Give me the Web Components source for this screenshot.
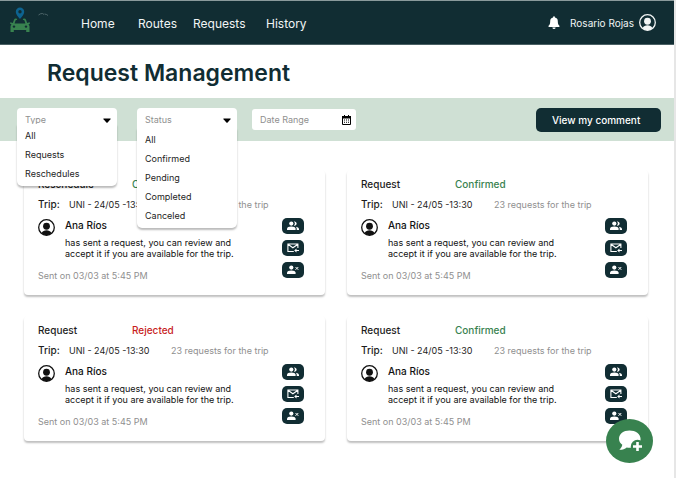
<!DOCTYPE html>
<html lang="en">
<head>
<meta charset="utf-8">
<title>Request Management</title>
<style>
  html, body { margin: 0; height: 100%; }
  body {
    font-family: Inter, "Liberation Sans", sans-serif;
    font-size: 9px;
    color: #1d1d1d;
    background: #fff;
    --ink: #112d33;
    --green: #38824f;
    --pale: #cfe0d4;
    --muted: #8f8f8f;
  }
</style>
</head>
<body>
<request-page></request-page>

<script>
const define = (name, html, setup) => {
  const tpl = document.createElement('template');
  tpl.innerHTML = html;
  customElements.define(name, class extends HTMLElement {
    constructor() {
      super();
      this.attachShadow({ mode: 'open' }).append(tpl.content.cloneNode(true));
    }
    connectedCallback() { if (setup) setup(this, this.shadowRoot); }
  });
};

define('user-avatar', `
<style>
  :host { display: block; width: 17px; height: 17px; flex: none; }
  svg { display: block; width: 100%; height: 100%; }
</style>
<svg viewBox="0 0 34 34" aria-hidden="true">
  <circle cx="17" cy="17" r="15.6" fill="none" stroke="currentColor" stroke-width="2.6"/>
  <circle cx="17" cy="14.5" r="6.8" fill="currentColor"/>
  <path d="M7 28c2-4 6-5.600 10-5.600s8 1.600 10 5.600c-3 3-6.500 4.300-10 4.300S10 31 7 28z" fill="currentColor"/>
</svg>`);

define('brand-logo', `
<style>
  :host { display: block; width: 40px; height: 27px; }
  svg { display: block; }
</style>
<svg width="40" height="27" viewBox="0 0 40 27" role="img" aria-label="Logo">
  <path d="M10 0.500a4.200 4.200 0 0 0-4.200 4.200C5.800 7.700 10 12 10 12s4.200-4.300 4.200-7.300A4.200 4.200 0 0 0 10 0.500z" fill="#0d6390"/>
  <circle cx="10" cy="4.700" r="1.700" fill="#112d33"/>
  <path d="M6.500 11.500H5.800Q4.500 11.500 4 12.800L2.800 16 .4 15.300 0 16.600l1.500.8Q.5 18.200.5 19.500v5.600h3.300v-2h12.400v2h3.300V19.500q0-1.300-1-2.100l1.500-.8-.4-1.300-2.400.7L16 12.800q-.5-1.300-1.800-1.300H13.500L12.700 13h1q.6 0 .8.500l.9 2.900H4.600l.9-2.900q.2-.5.8-.5h1z" fill="#38824f"/>
  <circle cx="4" cy="19.600" r="1.200" fill="#112d33"/>
  <circle cx="16" cy="19.600" r="1.200" fill="#112d33"/>
  <path d="M28.500 8q2-1.700 4-1.500l1.500 1M34.500 7q2 .2 3.500 1.500" fill="none" stroke="#5c7276" stroke-width=".8"/>
</svg>`);

define('app-header', `
<style>
  :host { display: block; background: var(--ink); color: #f2f5f5; border-top: 1px solid #8a9a9c; }
  header { display: flex; align-items: center; height: 43px; padding: 0 18px 0 10px; border-bottom: 1px solid #4a6064; }
  brand-logo { align-self: start; margin-top: 6px; }
  nav { display: grid; flex: 1; grid-template-columns: 57px 55px 73px auto; margin: 3px 0 0 31px; font-size: 12px; line-height: 16px; }
  a { color: inherit; text-decoration: none; }
  .user { display: flex; align-items: center; gap: 5px; font-size: 10px; color: inherit; }
  button { background: none; border: 0; padding: 0; margin: 0 10px 0 0; color: #fff; font: inherit; }
  button svg { display: block; }
</style>
<header>
  <brand-logo></brand-logo>
  <nav aria-label="Main">
    <a href="#home">Home</a><a href="#routes">Routes</a><a href="#requests">Requests</a><a href="#history">History</a>
  </nav>
  <button aria-label="Notifications">
    <svg width="12" height="13" viewBox="0 0 12 13"><path d="M6 .2a.9.9 0 0 1 .9.9v.4A3.700 3.700 0 0 1 9.800 5.200c0 2.600.6 3.600 1.600 4.500.5.500.2 1.200-.5 1.200H1.100c-.7 0-1-.7-.5-1.200 1-.9 1.600-1.900 1.600-4.500A3.700 3.700 0 0 1 5.100 1.500v-.4A.9.9 0 0 1 6 .2zM4.400 11.400h3.200a1.600 1.500 0 0 1-3.200 0z" fill="currentColor"/></svg>
  </button>
  <a class="user" href="#profile"><span>Rosario Rojas</span><user-avatar></user-avatar></a>
</header>`);

define('filter-select', `
<style>
  :host { display: block; position: relative; width: 100px; }
  select {
    display: block; box-sizing: border-box; width: 100%; height: 24px; padding: 0 8px;
    appearance: none; border: 0; border-radius: 4px; background: #fff;
    color: var(--muted); font: inherit; line-height: 22px;
  }
  .arrow { position: absolute; right: 6px; top: 10px; pointer-events: none; }
  ul {
    position: absolute; z-index: 2; left: 0; right: 0; top: var(--menu-top, 20px);
    margin: 0; padding: 2px 0 3px; list-style: none; background: #fff;
    border-radius: 0 0 5px 5px; box-shadow: 0 2px 2px rgba(0,0,0,.27);
  }
  li button {
    display: block; width: 100%; height: 19px; padding: 0 8px; border: 0; background: none;
    text-align: left; color: #1d1d1d; font: inherit;
  }
</style>
<select></select>
<svg class="arrow" width="8" height="5" viewBox="0 0 8 5" aria-hidden="true"><path d="M.8.400h6.400q.9.100.3.900L4.600 4.400q-.6.500-1.200 0L.5 1.300Q-.1.500.8.400z" fill="#000"/></svg>
<ul></ul>`, (host, root) => {
  const select = root.querySelector('select');
  const label = host.getAttribute('label');
  select.setAttribute('aria-label', label);
  select.add(new Option(label, ''));
  host.getAttribute('options').split(',').forEach(text => {
    select.add(new Option(text, text));
    const li = document.createElement('li');
    const b = document.createElement('button');
    b.type = 'button';
    b.textContent = text;
    b.addEventListener('click', () => { select.value = text; });
    li.append(b);
    root.querySelector('ul').append(li);
  });
});

define('date-field', `
<style>
  :host { display: flex; align-items: center; box-sizing: border-box; width: 104px; height: 21px; padding: 0 5px 0 8px; background: #fff; border-radius: 3px; }
  input { flex: 1; min-width: 0; border: 0; padding: 0; background: none; font: inherit; color: #1d1d1d; }
  input::placeholder { color: var(--muted); opacity: 1; }
</style>
<input type="text" placeholder="Date Range" aria-label="Date Range">
<svg width="9" height="10" viewBox="0 0 9 10" aria-hidden="true">
  <path d="M.5 1.500h8v8h-8z" fill="#fff" stroke="#000"/><path d="M0 1h9v2.500H0zM2 0h1v1H2zM6 0h1v1H6z" fill="#000"/>
  <path d="M2 4.500h1v1H2zM4 4.500h1v1H4zM6 4.500h1v1H6zM2 6.800h1v1H2zM4 6.800h1v1H4zM6 6.800h1v1H6z" fill="#000"/>
</svg>`);

define('filter-bar', `
<style>
  :host { display: flex; align-items: center; gap: 20px; height: 43px; padding: 0 13px 0 17px; background: var(--pale); }
  filter-select:first-of-type { --menu-top: 16px; }
  date-field { margin-left: -5px; }
  button {
    margin-left: auto; width: 125px; height: 24px; padding: 0 16px; border: 0; border-radius: 5px;
    background: var(--ink); color: #fff; font: 500 10px/22px Inter, "Liberation Sans", sans-serif; text-align: left; white-space: nowrap;
  }
</style>
<filter-select label="Type" options="All,Requests,Reschedules"></filter-select>
<filter-select label="Status" options="All,Confirmed,Pending,Completed,Canceled"></filter-select>
<date-field></date-field>
<button type="button">View my comment</button>`);

const people = '<circle cx="4.300" cy="2.600" r="2.100"/><path d="M0 9V7.600Q.3 5.600 4.300 5.500 8.300 5.600 8.600 7.600V9z"/><path d="M6.900.6a2.100 2.100 0 1 1 0 4q1-.9 1-2t-1-2zM8.800 5.700q3 .4 3.200 2V9H9.700V7.600q0-1-.9-1.900z"/>';
const mail = '<path d="M6.800 8.500H.9V1h10v4M.9 1.200l5 3.600 5-3.600" fill="none" stroke="currentColor" stroke-width="1.100"/><path d="M7.200 7.500l2.300-2v1.500H12v1H9.500v1.500z"/>';
const remove = '<circle cx="4.300" cy="2.600" r="2.100"/><path d="M0 9V7.600Q.3 5.600 4.300 5.500 8.300 5.600 8.600 7.600V9z"/><path d="M8.500 2l2.800 2.800M11.300 2L8.500 4.800" stroke="currentColor" stroke-width="1"/>';

define('icon-button', `
<style>
  :host { display: block; }
  button { display: grid; place-items: center; width: 22px; height: 16px; padding: 0; border: 0; border-radius: 5px; background: var(--ink); color: #fff; }
</style>
<button type="button"><svg width="12" height="10" viewBox="0 0 12 10" fill="currentColor"></svg></button>`, (host, root) => {
  root.querySelector('svg').innerHTML = { people, mail, remove }[host.getAttribute('icon')];
  root.querySelector('button').setAttribute('aria-label', host.getAttribute('label'));
});

define('request-card', `
<style>
  :host {
    display: grid; grid-template-columns: 1fr 22px; align-content: start; box-sizing: border-box; min-height: 125px;
    padding: 7px 21px 12px 14px; background: #fff; border-radius: 4px;
    box-shadow: 0 2px 2px rgba(0,0,0,.25); line-height: 11px;
  }
  .head, .trip { display: grid; align-items: center; font-size: 10px; grid-column: 1 / -1; }
  .head { grid-template-columns: 94px 1fr; height: 14px; font-weight: 500; }
  .trip { grid-template-columns: 31px 102px 1fr; height: 14px; margin-top: 6px; white-space: nowrap; }
  .trip b { font-weight: 500; }
  .trip span, .trip small { font-size: 9px; }
  small { font-size: 9px; color: var(--muted); }
  .status { color: var(--green); }
  :host([rejected]) .status { color: #c81e1e; }
  .person { display: grid; grid-template-columns: 17px 1fr; column-gap: 10px; margin-top: 8px; color: #111; }
  strong { display: block; font-size: 10px; line-height: 12px; font-weight: 500; }
  p { margin: 6px 0 0; }
  .sent { display: block; margin-top: 11px; }
  .actions { display: grid; gap: 6px; align-content: start; margin-top: 7px; }
</style>
<div class="head"><slot name="kind"></slot><span class="status"><slot name="status"></slot></span></div>
<div class="trip"><b>Trip:</b><span>UNI - 24/05 -13:30</span><small>23 requests for the trip</small></div>
<div>
  <div class="person">
    <user-avatar></user-avatar>
    <div><strong>Ana Ríos</strong><p>has sent a request, you can review and<br>accept it if you are available for the trip.</p></div>
  </div>
  <small class="sent">Sent on 03/03 at 5:45 PM</small>
</div>
<div class="actions">
  <icon-button icon="people" label="View passengers"></icon-button>
  <icon-button icon="mail" label="Reply"></icon-button>
  <icon-button icon="remove" label="Remove passenger"></icon-button>
</div>`);

define('comment-fab', `
<style>
  :host { display: block; position: fixed; z-index: 3; right: 23px; bottom: 15px; }
  button { display: grid; place-items: center; width: 47px; height: 44px; padding: 0; border: 0; border-radius: 50%; background: var(--green); }
</style>
<button type="button" aria-label="Add comment">
  <svg width="26" height="24" viewBox="0 0 26 24">
    <path d="M12.500 1.500C6.500 1.500 2 5 2 9.700c0 2.600 1.200 4.600 3.300 6-.3 2-1.600 3.500-3 5.100 3.200.1 5.600-.9 7.400-2.400 1 .2 1.900.3 2.900.3 6 0 11-3.700 11-8.700S18.500 1.500 12.500 1.500z" fill="#fff"/>
    <circle cx="20.500" cy="17.500" r="6.700" fill="#38824f"/>
    <path d="M20.500 13v9M16 17.500h9" stroke="#fff" stroke-width="2.600"/>
  </svg>
</button>`);

define('request-page', `
<style>
  :host { display: block; box-sizing: border-box; min-height: 100%; border-right: 2px solid #e6e6e6; }
  h1 { margin: 0; padding: 15px 0 11px 47px; font-size: 23px; line-height: 27px; font-weight: 600; color: var(--ink); }
  section { display: grid; grid-template-columns: 1fr 1fr; gap: 21px 22px; padding: 29px 26px 34px 24px; }
</style>
<app-header></app-header>
<main>
  <h1>Request Management</h1>
  <filter-bar></filter-bar>
  <section aria-label="Requests">
    <request-card><span slot="kind">Reschedule</span><span slot="status">Confirmed</span></request-card>
    <request-card><span slot="kind">Request</span><span slot="status">Confirmed</span></request-card>
    <request-card rejected><span slot="kind">Request</span><span slot="status">Rejected</span></request-card>
    <request-card><span slot="kind">Request</span><span slot="status">Confirmed</span></request-card>
  </section>
</main>
<comment-fab></comment-fab>`);
</script>
</body>
</html>
